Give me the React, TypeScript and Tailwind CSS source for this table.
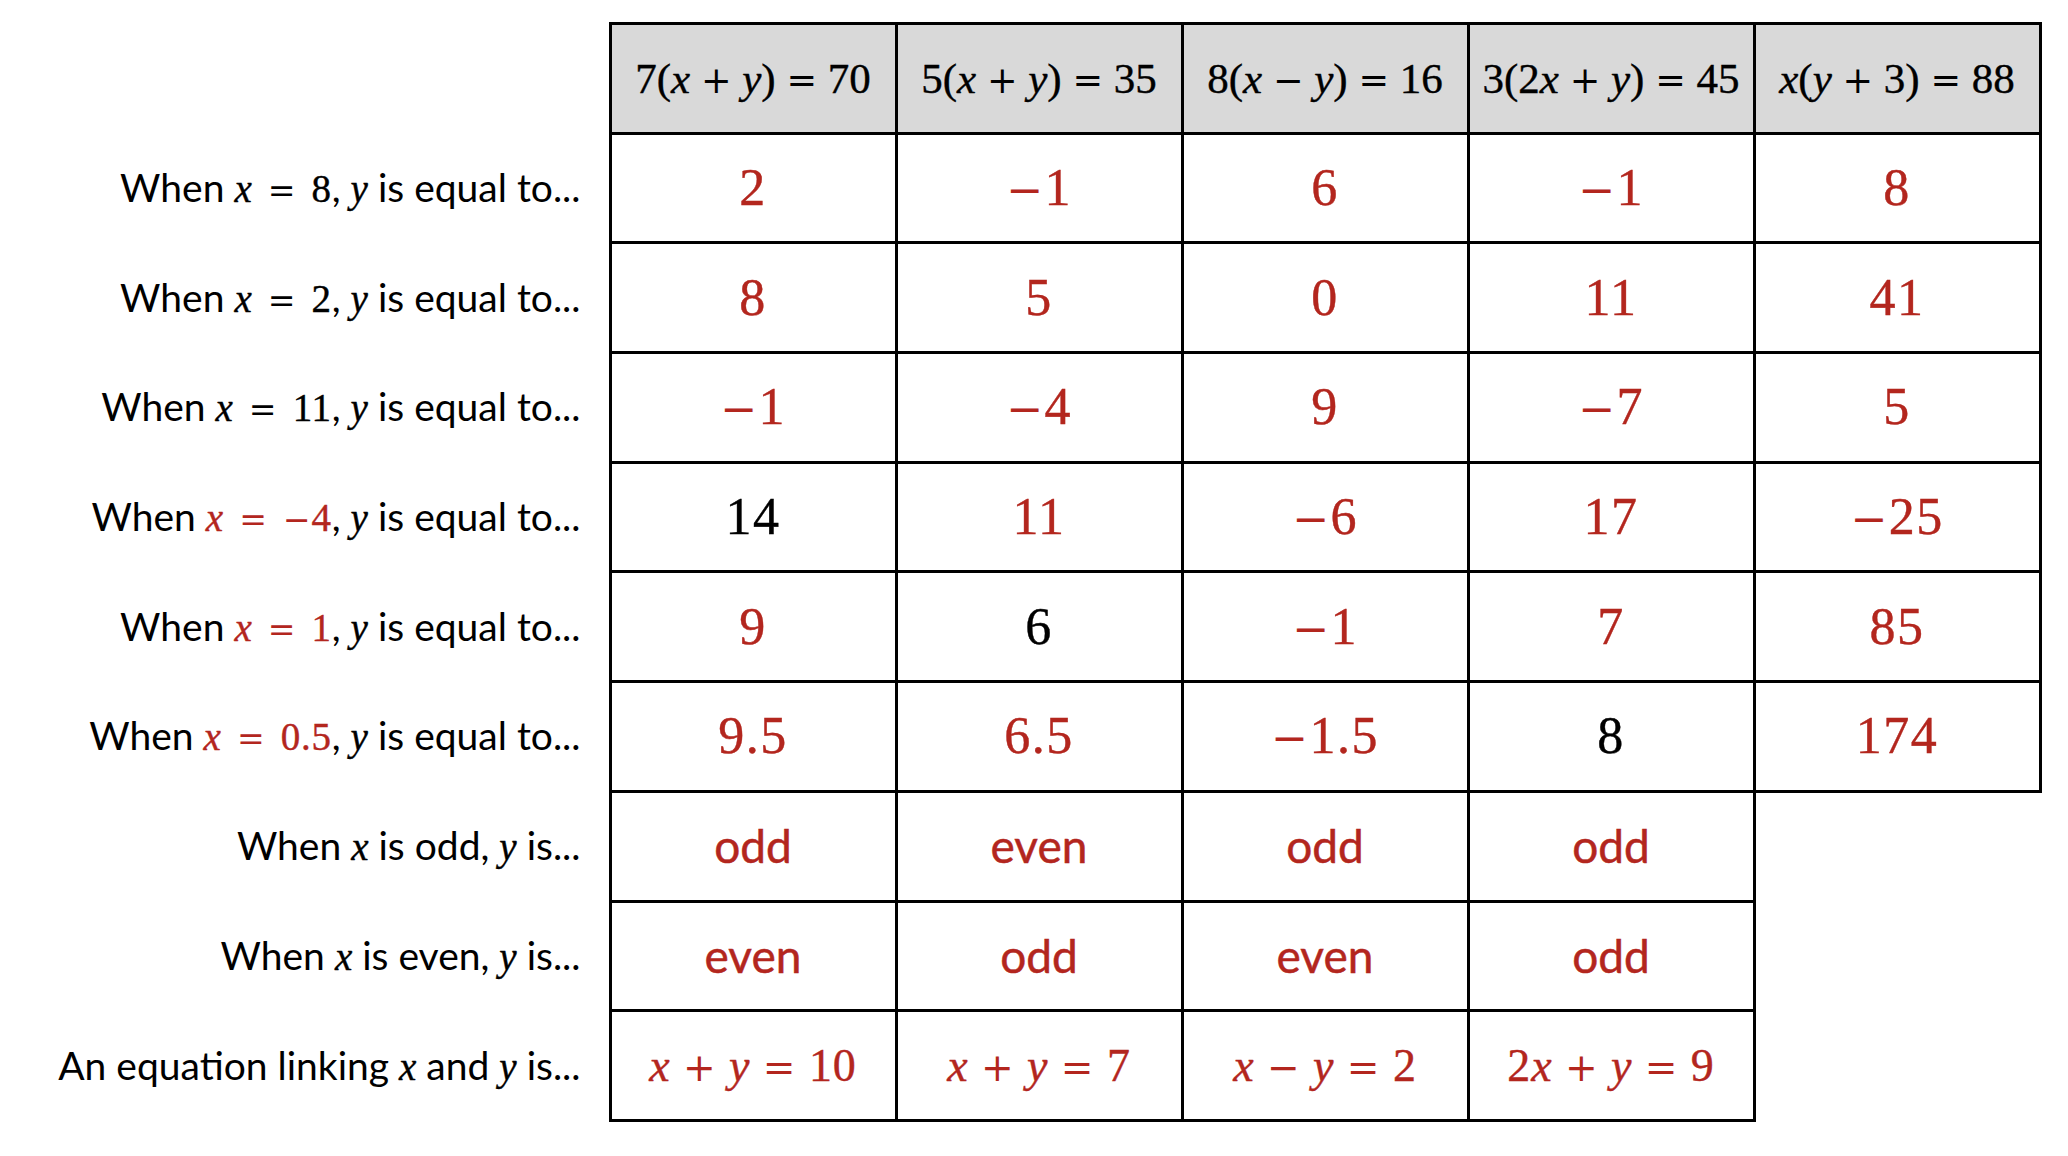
import type { ReactNode } from 'react'

const RED = 'text-[#b3261e]'

// math text: serif, x and y in italics, operators drawn a bit wider like Cambria Math
function M({ s, className = '' }: { s: string; className?: string }) {
    return (
        <span className={`font-['Liberation_Serif',serif] [-webkit-text-stroke:0.4px_currentColor] ${className}`}>
            {s.split('').map((ch, i) => {
                if (ch === 'x' || ch === 'y') return <i key={i}>{ch}</i>
                if (ch === '=' || ch === '+' || ch === '−')
                    return (
                        <span key={i} className="font-['DejaVu_Serif',serif] text-[0.85em] [-webkit-text-stroke:0px]">
                            {ch}
                        </span>
                    )
                return <span key={i}>{ch}</span>
            })}
        </span>
    )
}

type Cell = { v: string; kind: 'num' | 'word' | 'eq'; black?: boolean } | null

const headers = ['7(x + y) = 70', '5(x + y) = 35', '8(x − y) = 16', '3(2x + y) = 45', 'x(y + 3) = 88']

const n = (v: string, black = false): Cell => ({ v, kind: 'num', black })
const w = (v: string): Cell => ({ v, kind: 'word' })
const e = (v: string): Cell => ({ v, kind: 'eq' })

const LM = 'tracking-[0.02em] [word-spacing:0.12em]'

const rows: { label: ReactNode; cells: Cell[] }[] = [
    {
        label: <>When <M s="x = 8" className={LM} />, <M s="y" /> is equal to...</>,
        cells: [n('2'), n('−1'), n('6'), n('−1'), n('8')],
    },
    {
        label: <>When <M s="x = 2" className={LM} />, <M s="y" /> is equal to...</>,
        cells: [n('8'), n('5'), n('0'), n('11'), n('41')],
    },
    {
        label: <>When <M s="x = 11" className={LM} />, <M s="y" /> is equal to...</>,
        cells: [n('−1'), n('−4'), n('9'), n('−7'), n('5')],
    },
    {
        label: <>When <M s="x = −4" className={`${LM} ${RED}`} />, <M s="y" /> is equal to...</>,
        cells: [n('14', true), n('11'), n('−6'), n('17'), n('−25')],
    },
    {
        label: <>When <M s="x = 1" className={`${LM} ${RED}`} />, <M s="y" /> is equal to...</>,
        cells: [n('9'), n('6', true), n('−1'), n('7'), n('85')],
    },
    {
        label: <>When <M s="x = 0.5" className={`${LM} ${RED}`} />, <M s="y" /> is equal to...</>,
        cells: [n('9.5'), n('6.5'), n('−1.5'), n('8', true), n('174')],
    },
    {
        label: <>When <M s="x" /> is odd, <M s="y" /> is...</>,
        cells: [w('odd'), w('even'), w('odd'), w('odd'), null],
    },
    {
        label: <>When <M s="x" /> is even, <M s="y" /> is...</>,
        cells: [w('even'), w('odd'), w('even'), w('odd'), null],
    },
    {
        label: <>An equation linking <M s="x" /> and <M s="y" /> is...</>,
        cells: [e('x + y = 10'), e('x + y = 7'), e('x − y = 2'), e('2x + y = 9'), null],
    },
]

function ValueCell({ cell }: { cell: Cell }) {
    if (!cell) return <td className="border-0" />
    const color = cell.black ? 'text-black' : RED
    return (
        <td className="border-[3px] border-black text-center align-middle">
            {cell.kind === 'num' && <M s={cell.v} className={`text-[52px] tracking-[0.03em] ${color}`} />}
            {cell.kind === 'word' && (
                <span className={`font-['Lato',sans-serif] text-[46px] [-webkit-text-stroke:0.5px_currentColor] ${color}`}>{cell.v}</span>
            )}
            {cell.kind === 'eq' && <M s={cell.v} className={`text-[46px] tracking-[0.02em] ${color}`} />}
        </td>
    )
}

function App() {
    return (
        <div className="min-h-screen w-full bg-white">
            <table className="border-collapse table-fixed mt-[22px] leading-none">
                <colgroup>
                    <col className="w-[610px]" />
                    <col className="w-[286px]" />
                    <col className="w-[286px]" />
                    <col className="w-[286px]" />
                    <col className="w-[286px]" />
                    <col className="w-[286px]" />
                </colgroup>
                <tbody>
                    <tr className="h-[109.7px]">
                        <td />
                        {headers.map((h) => (
                            <td key={h} className="border-[3px] border-black bg-[#d9d9d9] text-center align-middle text-black">
                                <M s={h} className="text-[43px]" />
                            </td>
                        ))}
                    </tr>
                    {rows.map((r, i) => (
                        <tr key={i} className="h-[109.7px]">
                            <td className="pr-[28px] text-right align-middle font-['Lato',sans-serif] text-[39px] text-black whitespace-nowrap">
                                {r.label}
                            </td>
                            {r.cells.map((c, j) => (
                                <ValueCell key={j} cell={c} />
                            ))}
                        </tr>
                    ))}
                </tbody>
            </table>
        </div>
    )
}

export default App
